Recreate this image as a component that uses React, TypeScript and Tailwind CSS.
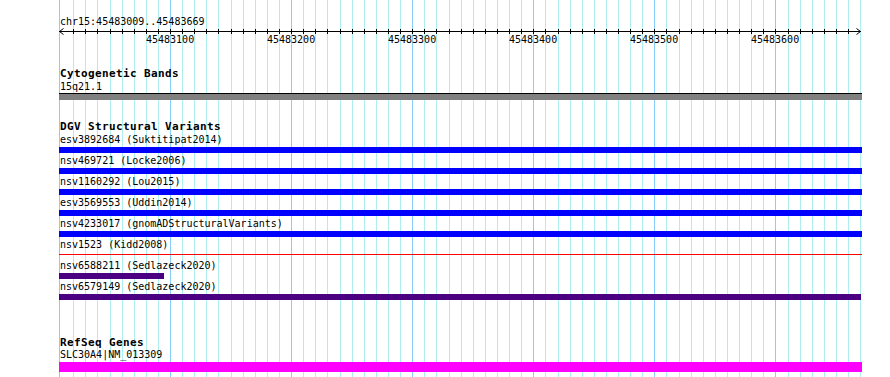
import React from "react";

const START = 45483020;
const ticks = Array.from({ length: 65 }, (_, k) => ({
  bp: START + 10 * k,
  x: Math.round(73.2 + 12.108 * k),
  major: (START + 10 * k) % 100 === 0,
}));

function Grid() {
  return (
    <svg className="absolute left-0 top-0" width={890} height={377}>
      <rect x={59} y={0} width={1} height={377} fill="#87cefa" />
      {ticks.map((t) => (
        <rect key={t.bp} x={t.x} y={0} width={1} height={377} fill={t.major ? "#87cefa" : "#afeeee"} />
      ))}
      <rect x={860} y={0} width={1} height={377} fill="#afeeee" />
    </svg>
  );
}

function Ruler() {
  return (
    <svg width={890} height={18} className="block">
      <rect x={59} y={3} width={802} height={1} fill="#000" />
      {ticks.map((t) => (
        <rect key={t.bp} x={t.x} y={1} width={1} height={5} fill="#000" />
      ))}
      <path d="M63.5 0.5 L59.5 3.5 L63.5 6.5" stroke="#000" strokeWidth={1} fill="none" />
      <path d="M856.5 0.5 L860.5 3.5 L856.5 6.5" stroke="#000" strokeWidth={1} fill="none" />
      {ticks
        .filter((t) => t.major)
        .map((t) => (
          <text
            key={t.bp}
            x={t.x - 24}
            y={15}
            fontFamily="'DejaVu Sans Mono', monospace"
            fontSize={10}
            fill="#000"
          >
            {t.bp}
          </text>
        ))}
    </svg>
  );
}

type Row = { label: string; kind: "blue" | "red" | "purple" | "purpleShort" };

const rows: Row[] = [
  { label: "esv3892684 (Suktitipat2014)", kind: "blue" },
  { label: "nsv469721 (Locke2006)", kind: "blue" },
  { label: "nsv1160292 (Lou2015)", kind: "blue" },
  { label: "esv3569553 (Uddin2014)", kind: "blue" },
  { label: "nsv4233017 (gnomADStructuralVariants)", kind: "blue" },
  { label: "nsv1523 (Kidd2008)", kind: "red" },
  { label: "nsv6588211 (Sedlazeck2020)", kind: "purpleShort" },
  { label: "nsv6579149 (Sedlazeck2020)", kind: "purple" },
];

function Title({ children }: { children: React.ReactNode }) {
  return (
    <div className="h-[12px] pl-[60px] text-[11px] leading-[12px] font-bold tracking-[0.38px] whitespace-nowrap">
      {children}
    </div>
  );
}

function FeatureRow({ row }: { row: Row }) {
  return (
    <div className="h-[21px] flex flex-col">
      <div className="h-[14px] pl-[60px] text-[10px] leading-[14px] whitespace-nowrap">{row.label}</div>
      <div className="h-[6px] ml-[59px] flex flex-col">
        {row.kind === "blue" && <div className="h-[6px] w-[803px] bg-[#0000ff]" />}
        {row.kind === "purple" && <div className="h-[6px] w-[802px] bg-[#4b0082]" />}
        {row.kind === "purpleShort" && <div className="h-[6px] w-[105px] bg-[#4b0082]" />}
        {row.kind === "red" && <div className="mt-[2px] h-[1px] w-[803px] bg-[#ff0000]" />}
      </div>
    </div>
  );
}

export default function App() {
  return (
    <div
      className="relative w-[890px] h-[377px] bg-white overflow-hidden text-black"
      style={{ fontFamily: "'DejaVu Sans Mono', monospace" }}
    >
      <Grid />
      <div className="relative flex flex-col">
        <div className="pt-[15px] h-[28px] pl-[60px] text-[10px] leading-[13px] whitespace-nowrap">
          chr15:45483009..45483669
        </div>
        <Ruler />

        <div className="mt-[22px] flex flex-col">
          <Title>Cytogenetic Bands</Title>
          <div className="h-[13px] pl-[60px] text-[10px] leading-[13px]">15q21.1</div>
          <div className="h-[7px] ml-[59px] w-[803px] border-t border-black bg-[#808080] box-border" />
        </div>

        <div className="mt-[21px] flex flex-col">
          <Title>DGV Structural Variants</Title>
          {rows.map((r) => (
            <FeatureRow key={r.label} row={r} />
          ))}
        </div>

        <div className="mt-[36px] flex flex-col">
          <Title>RefSeq Genes</Title>
          <div className="h-[12px] pl-[60px] text-[10px] leading-[12px]">SLC30A4|NM_013309</div>
          <div className="mt-[1px] h-[10px] ml-[59px] w-[803px] bg-[#ff00ff]" />
        </div>
      </div>
    </div>
  );
}
